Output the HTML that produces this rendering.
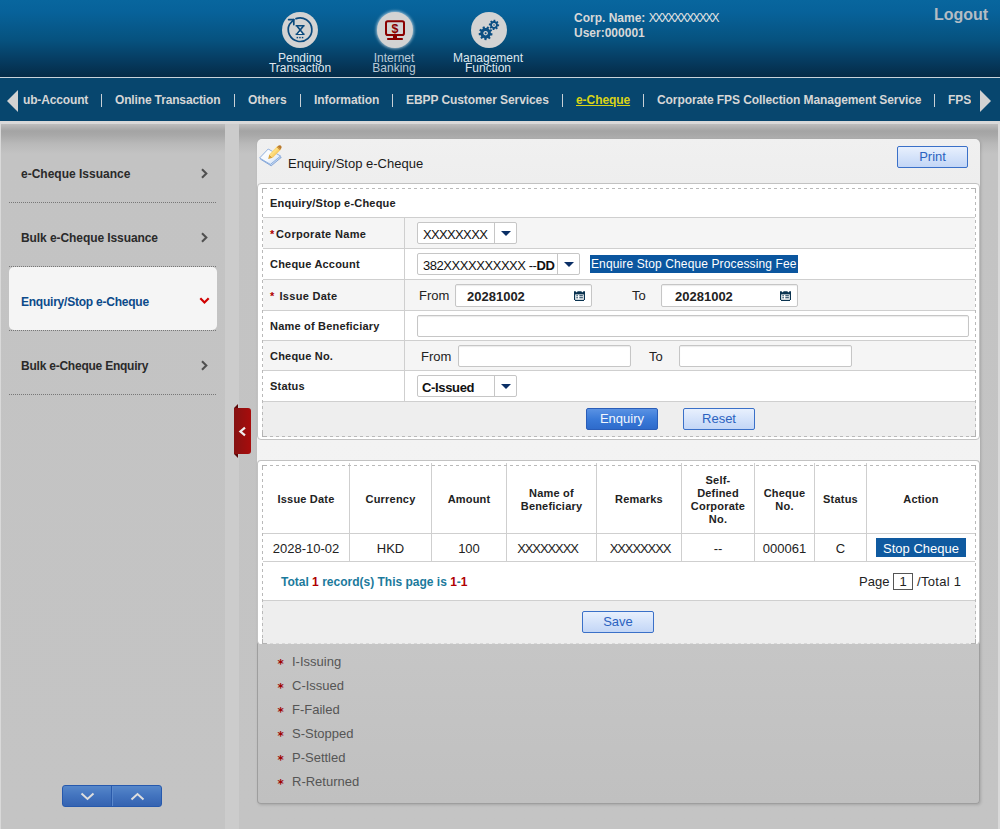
<!DOCTYPE html>
<html>
<head>
<meta charset="utf-8">
<title>Enquiry/Stop e-Cheque</title>
<style>
*{box-sizing:border-box;margin:0;padding:0}
html,body{width:1000px;height:829px;overflow:hidden}
body{position:relative;background:#d9d9d9;font-family:"Liberation Sans",Arial,sans-serif;font-size:12px;color:#222}
.abs{position:absolute}
/* header */
#hdr{left:0;top:0;width:1000px;height:77px;background:linear-gradient(#08669e 0,#07629a 12px,#06527f 40px,#063a5e 62px,#052b47 77px)}
#hline{left:0;top:77px;width:1000px;height:1px;background:#c9d3db}
#nav{left:0;top:78px;width:1000px;height:43px;background:#07466e}
.circ{width:36px;height:36px;border-radius:50%;background:#d3d3d3;top:12px}
.circ.on{box-shadow:0 0 3px 1px rgba(255,255,255,.6)}
.tlab{top:53px;width:120px;text-align:center;color:#dfe8ef;font-size:12px;line-height:10px}
.tlab.dim{color:#b9c9d6}
.uinf{left:574px;top:11px;color:#d8d8d8;font-weight:bold;font-size:12px;line-height:15px;white-space:nowrap}
.uinf i{font-style:normal;font-weight:normal;letter-spacing:-1.73px;color:#e2e2e2}
#logout{left:934px;top:6px;color:#b4bcc4;font-weight:bold;font-size:16px;line-height:18px}
.nv{top:93px;color:#d6d6d6;font-weight:bold;font-size:12px;line-height:15px;white-space:nowrap}
.nv.cur{color:#d9d317;text-decoration:underline}
.sep{top:94px;width:1px;height:13px;background:#c8d0d6}
/* sidebar */
#side{left:1px;top:124px;width:224px;height:705px;background:linear-gradient(#bdbdbd 0,#a4a4a4 7px,#a8a8a8 11px,#b9b9b9 20px,#c3c3c3 30px,#c4c4c4 100%)}
#gut{left:225px;top:124px;width:14px;height:705px;background:#cccccc}
#main{left:239px;top:124px;width:759px;height:705px;background:linear-gradient(#bdbdbd 0,#a4a4a4 7px,#a8a8a8 11px,#b9b9b9 20px,#c3c3c3 30px,#c4c4c4 100%)}
.sitem{left:21px;font-weight:bold;font-size:12px;line-height:15px;color:#2a2a2a;white-space:nowrap}
.sdot{left:9px;width:207px;height:0;border-top:1px dotted #777}
#ssel{left:9px;top:267px;width:208px;height:63px;background:#f5f5f5;border-radius:5px}

.chev{width:8px;height:10px}
#btm{left:62px;top:785px;width:100px;height:22px;border:1px solid #2659ad;border-radius:3px;background:linear-gradient(#5687ca,#4273be 50%,#3563b1)}
#btm i{position:absolute;left:48px;top:0;width:1px;height:20px;background:#2a5aaa;box-shadow:1px 0 0 #5a88cc}
#handle{left:234px;top:408px;width:17px;height:46px;border-radius:0 3px 3px 0;background:linear-gradient(90deg,#861212,#a80c0c)}
/* panel */
#panel{left:257px;top:139px;width:723px;height:665px;border-radius:5px 5px 4px 4px;background:linear-gradient(#c6c6c6 500px,#c0c0c0);border:1px solid #9e9e9e;border-top:none;box-shadow:1px 1px 3px rgba(0,0,0,.16)}
#ptop{left:257px;top:139px;width:723px;height:501px;border-radius:5px 5px 0 0;background:linear-gradient(#f0f0f0,#eeeeee 44px,#f3f3f3 300px,#f1f1f1)}
#ptitle{left:288px;top:156px;font-size:13px;line-height:16px;color:#1a1a1a;white-space:nowrap}
.btn{height:22px;border:1px solid #3a70c8;border-radius:2px;background:linear-gradient(#e8f0fd,#d5e3fa 50%,#c3d6f6);color:#2b62c0;font-size:13px;line-height:19px;text-align:center}
.btn.pri{background:linear-gradient(#5a92e3,#3a7ad8 50%,#2e6bcb);color:#f2f6fc;border-color:#2a5db8}
.box{background:#fff;border:1px solid #c2c2c2;border-radius:4px}
.dash{--c:#b9b9b9;--b:#b9b9b9;--s:linear-gradient(#b3b3b3,#b3b3b3);background:var(--s) 0 0/5px 1px no-repeat,var(--s) 0 0/1px 5px no-repeat,var(--s) 100% 0/5px 1px no-repeat,var(--s) 100% 0/1px 5px no-repeat,var(--s) 0 100%/5px 1px no-repeat,var(--s) 0 100%/1px 5px no-repeat,var(--s) 100% 100%/5px 1px no-repeat,var(--s) 100% 100%/1px 5px no-repeat,repeating-linear-gradient(90deg,transparent 0 3px,var(--c) 3px 6px) 5px 0/calc(100% - 10px) 1px no-repeat,repeating-linear-gradient(90deg,transparent 0 3px,var(--b) 3px 6px) 5px 100%/calc(100% - 10px) 1px no-repeat,repeating-linear-gradient(180deg,transparent 0 3px,var(--c) 3px 6px) 0 5px/1px calc(100% - 10px) no-repeat,repeating-linear-gradient(180deg,transparent 0 3px,var(--c) 3px 6px) 100% 5px/1px calc(100% - 10px) no-repeat}
.hl{height:1px;background:#cfcfcf}
.vl{width:1px;background:#cfcfcf}
.rowg{background:#f5f5f5}
.lab{left:270px;font-weight:bold;font-size:11px;line-height:14px;letter-spacing:.2px;color:#222;white-space:nowrap}
.lab b{color:#b00000;padding-right:1.5px}.red{color:#b00000}
.inp{height:22px;background:#fff;border:1px solid #c6c6c6;border-radius:2px;box-shadow:inset 0 1px 1px rgba(0,0,0,.08)}
.txt{font-size:13px;line-height:16px;color:#222;white-space:nowrap}
.sel{height:22px;background:#fff;border:1px solid #c6c6c6;border-radius:2px;font-size:13px;line-height:23px;color:#111;padding-left:5px;white-space:nowrap}
.sel i{position:absolute;top:0;right:21px;width:1px;height:20px;background:#c6c6c6}
.sel u{position:absolute;right:5px;top:8px;width:0;height:0;border-left:5px solid transparent;border-right:5px solid transparent;border-top:5px solid #0a2f66}
.th{font-weight:bold;font-size:11px;line-height:13px;letter-spacing:.2px;color:#222;text-align:center}
.td{font-size:13px;line-height:16px;color:#222;text-align:center;white-space:nowrap}
.leg{left:277px;font-size:13px;line-height:16px;color:#555;white-space:nowrap}
.leg b{color:#a00000;font-weight:bold;display:inline-block;width:15px;font-family:"DejaVu Sans",sans-serif;font-size:12px;line-height:10px;position:relative;top:2px;left:.5px}
</style>
</head>
<body>
<div id="hdr" class="abs"></div>
<div id="hline" class="abs"></div>
<div id="nav" class="abs"></div>

<div class="abs circ" style="left:282px"><svg width="36" height="36" viewBox="0 0 36 36" style="display:block">
<g fill="none" stroke="#0b4a7d" stroke-width="1.7" stroke-linejoin="round">
<path d="M14,6.6 A11.8,11.8 0 1 1 7.6,12.2 L11.7,7.6" stroke-linecap="round"/>
<path d="M6.6,7.6 L11.8,7.6 L11.8,12.6" stroke-linecap="round"/>
<path d="M13.6,13.7 L22.6,13.7 M13.6,22.3 L22.6,22.3" stroke-width="1.6"/>
<path d="M15,14 L21.4,22 M21.4,14 L15,22" stroke-width="1.7"/>
</g>
<path d="M18.1,19.6 L20.3,22 L15.9,22Z" fill="#e8e8e8"/>
<g fill="#0b4a7d"><rect x="14.6" y="24.9" width="1.5" height="1.4"/><rect x="17.2" y="24.9" width="1.5" height="1.4"/><rect x="19.8" y="24.9" width="1.5" height="1.4"/></g>
</svg></div>
<div class="abs circ on" style="left:377px"><svg width="36" height="36" viewBox="0 0 36 36" style="display:block">
<rect x="9" y="9.2" width="18" height="13.8" rx="1.8" fill="none" stroke="#8a0000" stroke-width="2"/>
<rect x="16" y="23.5" width="4" height="3" fill="#8a0000"/>
<rect x="10.2" y="26" width="15.6" height="2" fill="#8a0000"/>
<text x="18" y="20.6" text-anchor="middle" font-family="Liberation Sans,sans-serif" font-weight="bold" font-size="12.5" fill="#8a0000">$</text>
</svg></div>
<div class="abs circ" style="left:471px"><svg width="36" height="36" viewBox="0 0 36 36" style="display:block">
<g fill="#0c4f83" fill-rule="evenodd">
<path d="M19.90,21.04 L21.59,21.62 L21.20,23.53 L19.42,23.41 L18.76,24.48 L19.68,26.01 L18.16,27.23 L16.87,25.99 L15.68,26.39 L15.40,28.15 L13.45,28.10 L13.26,26.33 L12.09,25.87 L10.74,27.04 L9.28,25.75 L10.28,24.27 L9.68,23.16 L7.89,23.19 L7.60,21.27 L9.32,20.77 L9.57,19.54 L8.18,18.41 L9.20,16.75 L10.83,17.47 L11.81,16.69 L11.47,14.94 L13.32,14.32 L14.11,15.92 L15.36,15.95 L16.23,14.39 L18.04,15.11 L17.61,16.84 L18.55,17.67 L20.22,17.03 L21.15,18.74 L19.71,19.80Z M14.6,18.9 a2.3,2.3 0 1 0 0.01,0Z"/>
<path d="M26.85,12.28 L28.19,12.60 L28.03,14.22 L26.65,14.27 L26.16,15.19 L26.88,16.36 L25.62,17.39 L24.61,16.45 L23.62,16.75 L23.30,18.09 L21.68,17.93 L21.63,16.55 L20.71,16.06 L19.54,16.78 L18.51,15.52 L19.45,14.51 L19.15,13.52 L17.81,13.20 L17.97,11.58 L19.35,11.53 L19.84,10.61 L19.12,9.44 L20.38,8.41 L21.39,9.35 L22.38,9.05 L22.70,7.71 L24.32,7.87 L24.37,9.25 L25.29,9.74 L26.46,9.02 L27.49,10.28 L26.55,11.29Z M23,10.9 a2,2 0 1 0 0.01,0Z"/>
<circle cx="14.6" cy="21.2" r="1"/><circle cx="23" cy="12.9" r="0.75"/>
</g>
</svg></div>
<div class="abs tlab" style="left:240px">Pending<br>Transaction</div>
<div class="abs tlab dim" style="left:334px">Internet<br>Banking</div>
<div class="abs tlab" style="left:428px">Management<br>Function</div>
<div class="abs uinf">Corp. Name: <i>XXXXXXXXXXX</i><br>User:000001</div>
<div id="logout" class="abs">Logout</div>

<div id="side" class="abs"></div>
<div id="gut" class="abs"></div>
<div id="main" class="abs"></div>

<!-- nav -->
<svg class="abs" style="left:7px;top:90px" width="12" height="22" viewBox="0 0 12 22"><polygon points="0,11 11,0 11,22" fill="#d2d2d2"/></svg>
<svg class="abs" style="left:980px;top:90px" width="12" height="22" viewBox="0 0 12 22"><polygon points="11,11 0,0 0,22" fill="#d2d2d2"/></svg>
<div class="abs nv" style="left:23px;letter-spacing:-0.15px">ub-Account</div><div class="abs sep" style="left:101px"></div>
<div class="abs nv" style="left:115px;letter-spacing:-0.15px">Online Transaction</div><div class="abs sep" style="left:234px"></div>
<div class="abs nv" style="left:248px">Others</div><div class="abs sep" style="left:300px"></div>
<div class="abs nv" style="left:314px;letter-spacing:-0.07px">Information</div><div class="abs sep" style="left:392px"></div>
<div class="abs nv" style="left:406px;letter-spacing:-0.08px">EBPP Customer Services</div><div class="abs sep" style="left:562px"></div>
<div class="abs nv cur" style="left:576px;letter-spacing:-0.07px">e-Cheque</div><div class="abs sep" style="left:643px"></div>
<div class="abs nv" style="left:657px;letter-spacing:-0.085px">Corporate FPS Collection Management Service</div><div class="abs sep" style="left:934px"></div>
<div class="abs nv" style="left:948px;width:23px;overflow:hidden">FPS Payment</div>

<!-- sidebar -->
<div id="ssel" class="abs"></div>
<div class="abs sdot" style="top:202px"></div>
<div class="abs sdot" style="top:266px"></div>
<div class="abs sdot" style="top:330px"></div>
<div class="abs sdot" style="top:394px"></div>
<div class="abs sitem" style="top:167px">e-Cheque Issuance</div>
<div class="abs sitem" style="top:231px;letter-spacing:-.08px">Bulk e-Cheque Issuance</div>
<div class="abs sitem" style="top:295px;color:#0c4a8a;letter-spacing:-.23px">Enquiry/Stop e-Cheque</div>
<div class="abs sitem" style="top:359px;letter-spacing:-.23px">Bulk e-Cheque Enquiry</div>
<svg class="abs" style="left:200px;top:168px" width="9" height="11" viewBox="0 0 9 11"><polyline points="2,1.3 6.3,5.5 2,9.7" fill="none" stroke="#505050" stroke-width="2.1"/></svg>
<svg class="abs" style="left:200px;top:232px" width="9" height="11" viewBox="0 0 9 11"><polyline points="2,1.3 6.3,5.5 2,9.7" fill="none" stroke="#505050" stroke-width="2.1"/></svg>
<svg class="abs" style="left:199px;top:296px" width="11" height="9" viewBox="0 0 11 9"><polyline points="1.3,2.3 5.5,6.5 9.7,2.3" fill="none" stroke="#d00000" stroke-width="2.2"/></svg>
<svg class="abs" style="left:200px;top:360px" width="9" height="11" viewBox="0 0 9 11"><polyline points="2,1.3 6.3,5.5 2,9.7" fill="none" stroke="#505050" stroke-width="2.1"/></svg>
<div id="btm" class="abs"><i></i>
<svg class="abs" style="left:17px;top:6px" width="15" height="9" viewBox="0 0 15 9"><polyline points="1.5,1.5 7.5,7 13.5,1.5" fill="none" stroke="#dedede" stroke-width="2"/></svg>
<svg class="abs" style="left:67px;top:6px" width="15" height="9" viewBox="0 0 15 9"><polyline points="1.5,7.5 7.5,2 13.5,7.5" fill="none" stroke="#dedede" stroke-width="2"/></svg>
</div>
<svg class="abs" style="left:234px;top:404px" width="5" height="55" viewBox="0 0 5 55"><polygon points="0,4 4,0 4,4" fill="#5a0808"/><polygon points="0,50 4,54 4,50" fill="#5a0808"/></svg>
<div id="handle" class="abs"><svg class="abs" style="left:4px;top:18px" width="9" height="11" viewBox="0 0 9 11"><polyline points="7,1.6 2.4,5.5 7,9.4" fill="none" stroke="#f0f0f0" stroke-width="2.2"/></svg></div>

<!-- panel -->
<div id="panel" class="abs"></div>
<div id="ptop" class="abs"></div>
<svg class="abs" style="left:259px;top:144px" width="24" height="23" viewBox="0 0 24 23">
<defs><linearGradient id="pg" x1="0" y1="0" x2="1" y2="1"><stop offset="0" stop-color="#ffffff"/><stop offset=".55" stop-color="#f4f8fd"/><stop offset="1" stop-color="#b9d1f0"/></linearGradient>
<linearGradient id="pn" x1="0" y1="0" x2="1" y2="1"><stop offset="0" stop-color="#e8a326"/><stop offset=".45" stop-color="#ffe184"/><stop offset="1" stop-color="#e39a1c"/></linearGradient></defs>
<polygon points="1.5,15.2 10,6.6 22.3,13.4 12.2,21.8" fill="#c4d8f2" stroke="#7d9fd4" stroke-width=".9"/>
<polygon points="0.6,14 9.2,5 21.6,12 11.4,20.4" fill="url(#pg)" stroke="#86a8da" stroke-width=".9"/>
<polygon points="9.2,15 10.3,10.4 13.8,13.7" fill="#d9a23a"/>
<polygon points="10.3,10.4 18.4,2.1 21.9,5.4 13.8,13.7" fill="url(#pn)"/>
<path d="M18.6,2.4 L19.6,1.5 Q21.4,0.6 22.4,2.2 Q23.2,3.6 21.6,5.2Z" fill="#b9792c"/>
<path d="M17.7,3.3 L18.6,2.4 L21.6,5.2 L20.7,6.1Z" fill="#c98a34"/>
</svg>
<div id="ptitle" class="abs">Enquiry/Stop e-Cheque</div>
<div class="abs btn" style="left:897px;top:146px;width:71px">Print</div>

<!-- form box -->
<div class="abs box" style="left:257px;top:183px;width:723px;height:257px"></div>
<div class="abs rowg" style="left:263px;top:218px;width:712px;height:30px"></div>
<div class="abs rowg" style="left:263px;top:280px;width:712px;height:30px"></div>
<div class="abs rowg" style="left:263px;top:341px;width:712px;height:29px"></div>
<div class="abs" style="left:262px;top:402px;width:714px;height:35px;background:#eeeeee"></div>
<div class="abs hl" style="left:263px;top:217px;width:712px"></div>
<div class="abs hl" style="left:263px;top:248px;width:712px"></div>
<div class="abs hl" style="left:263px;top:279px;width:712px"></div>
<div class="abs hl" style="left:263px;top:310px;width:712px"></div>
<div class="abs hl" style="left:263px;top:340px;width:712px"></div>
<div class="abs hl" style="left:263px;top:370px;width:712px"></div>
<div class="abs hl" style="left:263px;top:401px;width:712px"></div>
<div class="abs vl" style="left:404px;top:217px;height:185px"></div>
<div class="abs dash" style="left:262px;top:188px;width:714px;height:249px"></div>
<div class="abs lab" style="top:196px">Enquiry/Stop e-Cheque</div>
<div class="abs lab" style="top:227px;letter-spacing:.32px"><b>*</b>Corporate Name</div>
<div class="abs lab" style="top:257px">Cheque Account</div>
<div class="abs lab" style="top:289px;letter-spacing:.3px"><b>*</b> Issue Date</div>
<div class="abs lab" style="top:319px">Name of Beneficiary</div>
<div class="abs lab" style="top:349px">Cheque No.</div>
<div class="abs lab" style="top:379px">Status</div>

<div class="abs sel" style="left:417px;top:222px;width:100px;letter-spacing:-.65px">XXXXXXXX<i></i><u></u></div>
<div class="abs sel" style="left:417px;top:253px;width:163px;letter-spacing:-.45px">382XXXXXXXXXX --<b>DD</b><i></i><u></u></div>
<div class="abs" style="left:590px;top:255px;width:208px;height:18px;background:#0b569f;color:#fff;font-size:12px;line-height:18px;padding-left:1px;letter-spacing:.12px;white-space:nowrap">Enquire Stop Cheque Processing Fee</div>
<div class="abs txt" style="left:419px;top:288px">From</div>
<div class="abs inp" style="left:455px;top:284px;width:137px;height:23px"></div>
<div class="abs txt" style="left:467px;top:289px;font-weight:bold">20281002</div>
<div class="abs txt" style="left:632px;top:288px">To</div>
<div class="abs inp" style="left:661px;top:284px;width:137px;height:23px"></div>
<div class="abs txt" style="left:675px;top:289px;font-weight:bold">20281002</div>
<svg class="abs" style="left:574px;top:291px" width="11" height="10" viewBox="0 0 11 10"><path d="M0,0.3 H1.6 L2.3,1.2 H3 L3.6,0.3 H7.4 L8,1.2 H8.7 L9.4,0.3 H11 V9 H10 V10 H1 V9 H0Z" fill="#0a3350"/><rect x="1.2" y="3.4" width="8.6" height="5.4" fill="#fff"/><g fill="#0a3350"><rect x="2.2" y="4.3" width="1.8" height="1" rx=".4"/><rect x="5.2" y="4.3" width="3.8" height="1" rx=".4"/><rect x="2.2" y="6.3" width="1.8" height="1" rx=".4"/><rect x="5.2" y="6.3" width="3.8" height="1" rx=".4"/></g></svg>
<svg class="abs" style="left:780px;top:291px" width="11" height="10" viewBox="0 0 11 10"><path d="M0,0.3 H1.6 L2.3,1.2 H3 L3.6,0.3 H7.4 L8,1.2 H8.7 L9.4,0.3 H11 V9 H10 V10 H1 V9 H0Z" fill="#0a3350"/><rect x="1.2" y="3.4" width="8.6" height="5.4" fill="#fff"/><g fill="#0a3350"><rect x="2.2" y="4.3" width="1.8" height="1" rx=".4"/><rect x="5.2" y="4.3" width="3.8" height="1" rx=".4"/><rect x="2.2" y="6.3" width="1.8" height="1" rx=".4"/><rect x="5.2" y="6.3" width="3.8" height="1" rx=".4"/></g></svg>
<div class="abs inp" style="left:417px;top:315px;width:552px"></div>
<div class="abs txt" style="left:421px;top:349px">From</div>
<div class="abs inp" style="left:458px;top:345px;width:173px"></div>
<div class="abs txt" style="left:649px;top:349px">To</div>
<div class="abs inp" style="left:679px;top:345px;width:173px"></div>
<div class="abs sel" style="left:417px;top:375px;width:100px;font-weight:bold;letter-spacing:-.35px;padding-left:4px">C-Issued<i></i><u></u></div>
<div class="abs btn pri" style="left:586px;top:408px;width:72px">Enquiry</div>
<div class="abs btn" style="left:683px;top:408px;width:72px">Reset</div>

<!-- table box -->
<div class="abs box" style="left:257px;top:460px;width:723px;height:185px;border-bottom-color:transparent;border-radius:4px;background-clip:padding-box"></div>
<div class="abs" style="left:262px;top:601px;width:714px;height:43px;background:#eeeeee"></div>
<div class="abs hl" style="left:263px;top:533px;width:712px"></div>
<div class="abs hl" style="left:263px;top:561px;width:712px"></div>
<div class="abs hl" style="left:263px;top:600px;width:712px"></div>
<div class="abs vl" style="left:349px;top:463px;height:98px"></div>
<div class="abs vl" style="left:431px;top:463px;height:98px"></div>
<div class="abs vl" style="left:506px;top:463px;height:98px"></div>
<div class="abs vl" style="left:596px;top:463px;height:98px"></div>
<div class="abs vl" style="left:681px;top:463px;height:98px"></div>
<div class="abs vl" style="left:754px;top:463px;height:98px"></div>
<div class="abs vl" style="left:814px;top:463px;height:98px"></div>
<div class="abs vl" style="left:866px;top:463px;height:98px"></div>
<div class="abs dash" style="left:262px;top:465px;width:714px;height:179px;--b:#d8d8d8"></div>

<div class="abs th" style="left:263px;top:493px;width:86px">Issue Date</div>
<div class="abs th" style="left:350px;top:493px;width:81px">Currency</div>
<div class="abs th" style="left:432px;top:493px;width:74px">Amount</div>
<div class="abs th" style="left:507px;top:487px;width:89px">Name of<br>Beneficiary</div>
<div class="abs th" style="left:597px;top:493px;width:84px">Remarks</div>
<div class="abs th" style="left:682px;top:474px;width:72px">Self-<br>Defined<br>Corporate<br>No.</div>
<div class="abs th" style="left:755px;top:487px;width:59px">Cheque<br>No.</div>
<div class="abs th" style="left:815px;top:493px;width:51px">Status</div>
<div class="abs th" style="left:867px;top:493px;width:108px">Action</div>

<div class="abs td" style="left:263px;top:541px;width:86px">2028-10-02</div>
<div class="abs td" style="left:350px;top:541px;width:81px">HKD</div>
<div class="abs td" style="left:432px;top:541px;width:74px">100</div>
<div class="abs td" style="left:503px;top:541px;width:89px;letter-spacing:-1.1px">XXXXXXXX</div>
<div class="abs td" style="left:598px;top:541px;width:84px;letter-spacing:-1.1px">XXXXXXXX</div>
<div class="abs td" style="left:682px;top:541px;width:72px">--</div>
<div class="abs td" style="left:755px;top:541px;width:59px">000061</div>
<div class="abs td" style="left:815px;top:541px;width:51px">C</div>
<div class="abs" style="left:876px;top:538px;width:90px;height:19px;background:#0f5aa0;color:#fff;font-size:13px;line-height:21px;overflow:hidden;text-align:center;white-space:nowrap">Stop Cheque</div>

<div class="abs" style="left:281px;top:575px;font-weight:bold;font-size:12px;line-height:15px;color:#1b7a9c;white-space:nowrap">Total <span class="red">1</span> record(s) This page is <span class="red">1</span>-<span class="red">1</span></div>
<div class="abs txt" style="left:859px;top:574px">Page</div>
<div class="abs" style="left:893px;top:573px;width:20px;height:17px;border:1px solid #555;background:#fff;font-size:13px;line-height:15px;text-align:center;color:#222">1</div>
<div class="abs txt" style="left:917px;top:574px;letter-spacing:.3px">/Total 1</div>
<div class="abs btn" style="left:582px;top:611px;width:72px">Save</div>

<!-- legend -->
<div class="abs leg" style="top:654px"><b>*</b>I-Issuing</div>
<div class="abs leg" style="top:678px"><b>*</b>C-Issued</div>
<div class="abs leg" style="top:702px"><b>*</b>F-Failed</div>
<div class="abs leg" style="top:726px"><b>*</b>S-Stopped</div>
<div class="abs leg" style="top:750px"><b>*</b>P-Settled</div>
<div class="abs leg" style="top:774px"><b>*</b>R-Returned</div>
</body>
</html>
